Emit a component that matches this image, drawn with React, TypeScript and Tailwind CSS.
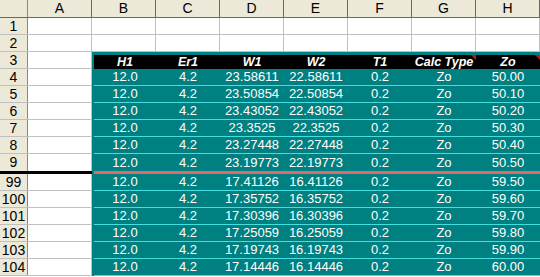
import React from 'react';

const letters = ['A', 'B', 'C', 'D', 'E', 'F', 'G', 'H'];
const heads = ['H1', 'Er1', 'W1', 'W2', 'T1', 'Calc Type', 'Zo'];

type Row = { n: string; w1: string; w2: string; zo: string };

const top: Row[] = [
  { n: '4', w1: '23.58611', w2: '22.58611', zo: '50.00' },
  { n: '5', w1: '23.50854', w2: '22.50854', zo: '50.10' },
  { n: '6', w1: '23.43052', w2: '22.43052', zo: '50.20' },
  { n: '7', w1: '23.3525', w2: '22.3525', zo: '50.30' },
  { n: '8', w1: '23.27448', w2: '22.27448', zo: '50.40' },
  { n: '9', w1: '23.19773', w2: '22.19773', zo: '50.50' },
];

const bottom: Row[] = [
  { n: '99', w1: '17.41126', w2: '16.41126', zo: '59.50' },
  { n: '100', w1: '17.35752', w2: '16.35752', zo: '59.60' },
  { n: '101', w1: '17.30396', w2: '16.30396', zo: '59.70' },
  { n: '102', w1: '17.25059', w2: '16.25059', zo: '59.80' },
  { n: '103', w1: '17.19743', w2: '16.19743', zo: '59.90' },
  { n: '104', w1: '17.14446', w2: '16.14446', zo: '60.00' },
];

const RowHead = ({ n }: { n: string }) => (
  <div className="w-[28px] shrink-0 h-full flex items-center justify-center bg-[#ece9d8] border-r border-[#8a8878] text-[14px] text-black">
    {n}
  </div>
);

const ColA = () => <div className="w-[64px] shrink-0 h-full bg-white border-r border-[#c0c0c0]" />;

const DataRow = ({ r, split }: { r: Row; split?: boolean }) => {
  const cells = ['12.0', '4.2', r.w1, r.w2, '0.2', 'Zo', r.zo];
  return (
    <div className={`flex ${split ? 'h-[20px]' : 'h-[17px]'}`}>
      <div className={`flex shrink-0 ${split ? 'border-b-[3px] border-black' : 'border-b border-[#c0c0c0]'}`}>
        <RowHead n={r.n} />
        <ColA />
      </div>
      <div className="flex-1 bg-[#008080] pl-[2px]">
        <div className={`flex h-full ${split ? 'border-b-[3px] border-[#e06a6a]' : 'border-b border-[#40e0e0]'}`}>
          {cells.map((c, i) => (
            <div
              key={i}
              className={`${i === 0 ? 'w-[62px]' : 'w-[64px]'} shrink-0 flex items-center justify-center text-white text-[13px]`}
            >
              {c}
            </div>
          ))}
        </div>
      </div>
    </div>
  );
};

export default function App() {
  return (
    <div className="w-[540px] h-[277px] overflow-hidden bg-white select-none" style={{ fontFamily: '"Liberation Sans", Arial, sans-serif' }}>
      {/* Column headers */}
      <div className="flex h-[18px] border-b border-[#6b6a60] bg-[#ece9d8]">
        <div className="w-[28px] shrink-0 border-r border-[#8a8878]" />
        {letters.map((l) => (
          <div key={l} className="w-[64px] shrink-0 flex items-center justify-center border-r border-[#6b6a60] text-[14px] text-black">
            {l}
          </div>
        ))}
      </div>

      {/* Empty rows */}
      {['1', '2'].map((n) => (
        <div key={n} className="flex h-[17px] border-b border-[#c0c0c0]">
          <RowHead n={n} />
          {letters.map((l) => (
            <div key={l} className="w-[64px] shrink-0 h-full border-r border-[#c0c0c0]" />
          ))}
        </div>
      ))}

      {/* Table header row */}
      <div className="flex h-[17px]">
        <div className="flex shrink-0 border-b border-[#c0c0c0]">
          <RowHead n="3" />
          <ColA />
        </div>
        <div className="flex-1 bg-[#008080] pt-[3px] pl-[2px] pr-[3px]">
          <div className="flex h-full bg-black">
            {heads.map((h, i) => (
              <div
                key={h}
                className={`${i === 0 ? 'w-[62px]' : 'w-[64px]'} ${i === 6 ? 'flex-1' : ''} shrink-0 relative flex items-center justify-center text-white text-[12.5px] font-bold italic`}
              >
                {h}
                {(i === 5 || i === 6) && (
                  <span className="absolute top-0 right-0 w-0 h-0 border-t-[5px] border-l-[5px] border-t-[#d01010] border-l-transparent" />
                )}
              </div>
            ))}
          </div>
        </div>
      </div>

      {top.map((r, i) => (
        <DataRow key={r.n} r={r} split={i === top.length - 1} />
      ))}
      {bottom.map((r) => (
        <DataRow key={r.n} r={r} />
      ))}
    </div>
  );
}
